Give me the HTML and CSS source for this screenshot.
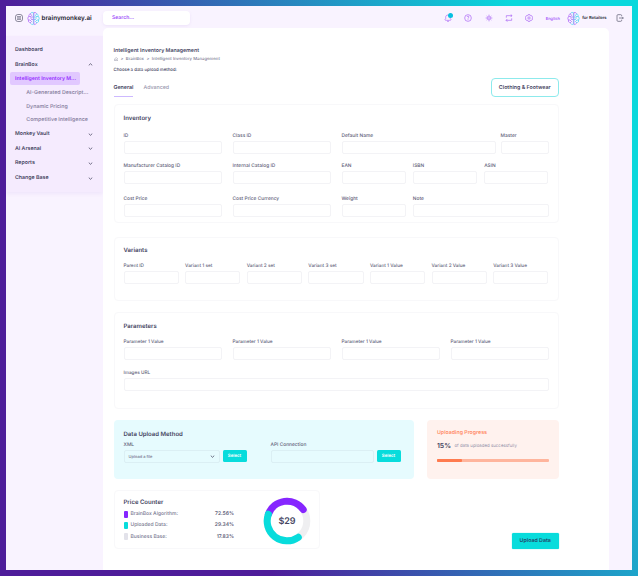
FILE: index.html
```html
<!DOCTYPE html>
<html lang="en">
<head>
  <meta charset="UTF-8" />
  <meta name="viewport" content="width=device-width, initial-scale=1.0"/>
  <title>brainymonkey.ai</title>
  <link rel="stylesheet" href="styles.css">
</head>
<body>
  <svg width="0" height="0" class="defs">
    <linearGradient id="brainFill" x1="0" x2="1" y1="0" y2="0">
      <stop offset="0.4" stop-color="#b06cf8"/>
      <stop offset="0.65" stop-color="#4fd6f0"/>
    </linearGradient>
    <symbol id="brain" viewBox="0 0 26 28">
      <g fill="none" stroke="url(#brainFill)" stroke-width="1.5" stroke-linecap="round" stroke-linejoin="round">
        <path d="M12 2C9 1 7 3 7 5C4 5 3 8 4 10C1 11 1 15 3 17C2 20 4 23 7 22C7 25 10 27 12 26Z"/>
        <path d="M14.500 2C17 1 19 3 19 5C22 5 23 8 22 10C25 11 25 15 23 17C24 20 22 23 19 22C19 25 16 27 14.500 26Z"/>
        <path d="M7 5L9 8M4 10H8V14M3 17H6L8 19M7 22L9 20M12 11H10M12 16H9M19 5L17 8M22 10H18V14M23 17H20L18 19M19 22L17 20M15 11H16M15 16H17"/>
      </g>
    </symbol>
    <symbol id="chevron" viewBox="0 0 10 6"><path d="M1.500 1.200L5 4.600L8.500 1.200" fill="none" stroke="currentColor" stroke-width="1.500"/></symbol>
  </svg>

  <div class="app">
    <header class="topbar">
      <svg class="menu-icon" viewBox="0 0 24 24"><rect x="1.500" y="1.500" width="21" height="21" rx="7"/><path d="M6 8H18M6 12H18M6 16H18"/></svg>
      <svg class="brain"><use href="#brain"/></svg>
      <span class="brand">brainymonkey.ai</span>
      <div class="search">Search...</div>
      <nav class="tools">
        <span class="bell">
          <svg viewBox="0 0 24 24"><path d="M12 3C7 3 5 6 5 10V14L3 17C3 19 5 19 7 19H17C19 19 21 19 21 17L19 14V10M9 21C10 23 14 23 15 21"/></svg>
          <i class="dot"></i>
        </span>
        <svg viewBox="0 0 24 24"><circle cx="12" cy="12" r="10"/><path d="M9 9C9 6 15 6 15 9C15 11 12 11 12 14M12 16V18"/></svg>
        <svg viewBox="0 0 24 24"><circle cx="12" cy="12" r="4"/><path d="M12 2V7M12 17V22M2 12H7M17 12H22M5 6L8.500 9M19 6L15.500 9M5 18L8.500 15M19 18L15.500 15"/></svg>
        <svg viewBox="0 0 24 24"><path d="M4 11V5H21M17 1L21 5L17 9M20 13V19H3M7 15L3 19L7 23"/></svg>
        <svg viewBox="0 0 24 24"><circle cx="12" cy="12" r="3.500"/><path d="M9 2H15L16 5L20 5L23 10L21 12L23 15L20 19H16L15 22H9L8 19H4L1 15L3 12L1 10L4 5L8 5Z"/></svg>
      </nav>
      <span class="lang">English</span>
      <svg class="brain"><use href="#brain"/></svg>
      <span class="account">for Retailers</span>
      <svg class="logout" viewBox="0 0 24 24"><path d="M17 7V5Q17 2 14 2H6Q3 2 3 5V19Q3 22 6 22H14Q17 22 17 19V17M9 12H22M19 9L22 12L19 15"/></svg>
    </header>

    <div class="body">
      <aside class="sidebar">
        <a class="item">Dashboard</a>
        <a class="item">BrainBox <svg class="chev up"><use href="#chevron"/></svg></a>
        <a class="active">Intelligent Inventory M...</a>
        <a class="sub">AI-Generated Descript...</a>
        <a class="sub">Dynamic Pricing</a>
        <a class="sub">Competitive Intelligence</a>
        <a class="item">Monkey Vault <svg class="chev"><use href="#chevron"/></svg></a>
        <a class="item">AI Arsenal <svg class="chev"><use href="#chevron"/></svg></a>
        <a class="item">Reports <svg class="chev"><use href="#chevron"/></svg></a>
        <a class="item">Change Base <svg class="chev"><use href="#chevron"/></svg></a>
      </aside>

      <main class="content">
        <h1>Intelligent Inventory Management</h1>
        <div class="crumbs">
          <svg viewBox="0 0 24 24"><path d="M3 10L12 3L21 10V21H15V14H9V21H3Z"/></svg>
          <span>&gt;</span><span>BrainBox</span><span>&gt;</span><span>Intelligent Inventory Management</span>
        </div>
        <p class="hint">Choose a data upload method:</p>

        <div class="tabs-row">
          <div class="tabs">
            <span class="tab selected">General</span>
            <span class="tab">Advanced</span>
          </div>
          <button class="outline">Clothing &amp; Footwear</button>
        </div>

        <section class="card inventory">
          <h2>Inventory</h2>
          <div class="row">
            <label>ID<input></label>
            <label>Class ID<input></label>
            <div class="group name-master">
              <label>Default Name<input></label>
              <label>Master<input></label>
            </div>
          </div>
          <div class="row">
            <label>Manufacturer Catalog ID<input></label>
            <label>Internal Catalog ID<input></label>
            <div class="group codes">
              <label>EAN<input></label>
              <label>ISBN<input></label>
              <label>ASIN<input></label>
            </div>
          </div>
          <div class="row">
            <label>Cost Price<input></label>
            <label>Cost Price Currency<input></label>
            <div class="group weight-note">
              <label>Weight<input></label>
              <label>Note<input></label>
            </div>
          </div>
        </section>

        <section class="card variants">
          <h2>Variants</h2>
          <div class="row">
            <label>Parent ID<input></label>
            <label>Variant 1 set<input></label>
            <label>Variant 2 set<input></label>
            <label>Variant 3 set<input></label>
            <label>Variant 1 Value<input></label>
            <label>Variant 2 Value<input></label>
            <label>Variant 3 Value<input></label>
          </div>
        </section>

        <section class="card parameters">
          <h2>Parameters</h2>
          <div class="row">
            <label>Parameter 1 Value<input></label>
            <label>Parameter 1 Value<input></label>
            <label>Parameter 1 Value<input></label>
            <label>Parameter 1 Value<input></label>
          </div>
          <label>Images URL<input></label>
        </section>

        <div class="panels">
          <section class="upload">
            <h2>Data Upload Method</h2>
            <div class="sources">
              <label class="xml">XML<span class="picker">Upload a file <svg class="chev"><use href="#chevron"/></svg></span></label>
              <button class="select">Select</button>
              <label class="api">API Connection<input></label>
              <button class="select">Select</button>
            </div>
          </section>
          <section class="progress">
            <h3>Uploading Progress</h3>
            <p><strong>15%</strong> <span>of data uploaded successfully</span></p>
            <div class="bar"><div class="fill"></div></div>
          </section>
        </div>

        <div class="bottom">
          <section class="card price">
            <div class="legend">
              <h2>Price Counter</h2>
              <div class="entry"><i class="violet"></i><span>BrainBox Algorithm:</span><b>72.56%</b></div>
              <div class="entry"><i class="cyan"></i><span>Uploaded Data:</span><b>29.34%</b></div>
              <div class="entry"><i class="grey"></i><span>Business Base:</span><b>17.83%</b></div>
            </div>
            <svg class="donut" viewBox="0 0 48 48">
              <circle cx="24" cy="24" r="19.800" stroke="#efeff1"/>
              <path d="M5.400 17.200A19.800 19.800 0 0 1 40.200 12.600" stroke="#8626ff"/>
              <path d="M5.400 17.200A19.800 19.800 0 0 0 35.300 40.300" stroke="#08dcdc"/>
              <text x="24" y="27.200">$29</text>
            </svg>
          </section>
          <button class="submit">Upload Data</button>
        </div>
      </main>
    </div>
  </div>
</body>
</html>
```
FILE: styles.css
```css
* {
  box-sizing: border-box;
}

body {
  margin: 0;
  padding: 6px;
  width: 638px;
  height: 576px;
  overflow: hidden;
  font-family: Inter, "Liberation Sans", sans-serif;
  font-size: 5.2px;
  text-rendering: geometricPrecision;
  color: #45455f;
  background: linear-gradient(65deg, #4e1d9a 30%, #0ad8dc 86%);
}

.defs {
  position: absolute;
}

h1, h2, h3, p {
  margin: 0;
}

button {
  font-family: inherit;
  text-rendering: inherit;
  padding: 1px 0 0;
  border: none;
}

.app {
  width: 626px;
  height: 564px;
  background: #f9f3ff;
}

/* top bar */
.topbar {
  height: 22px;
  padding: 2px 8px 0 9px;
  display: flex;
  align-items: center;
}

.topbar svg {
  fill: none;
  flex: none;
}

.menu-icon {
  width: 8px;
  height: 8px;
  stroke: #55556a;
  stroke-width: 2;
}

.brain {
  width: 13px;
  height: 15px;
  margin-left: 3.500px;
}

.brand {
  flex: none;
  width: 63.500px;
  padding-left: 2px;
  font-size: 6.300px;
  font-weight: 600;
  color: #22222e;
}

.search {
  flex: none;
  width: 87px;
  height: 14.500px;
  padding-left: 9px;
  border-radius: 4px;
  background: #fff;
  box-shadow: 0 1px 3px rgba(130, 80, 200, 0.1);
  line-height: 15.500px;
  font-size: 5.100px;
  font-weight: 600;
  color: #a04dfa;
}

.tools {
  display: flex;
  gap: 12.300px;
  margin-left: 254px;
}

.tools svg {
  display: block;
  width: 8px;
  height: 8px;
  stroke: #a860f5;
  stroke-width: 2;
}

.bell {
  position: relative;
}

.dot {
  position: absolute;
  top: -1.500px;
  right: -0.500px;
  width: 5px;
  height: 5px;
  border-radius: 50%;
  background: #06bfe0;
}

.lang {
  flex: none;
  width: 18px;
  margin-left: 12.500px;
  font-size: 4.100px;
  font-weight: 500;
  color: #a04dfa;
}

.account {
  flex: none;
  width: 35.500px;
  padding-left: 2px;
  font-size: 4.200px;
  font-weight: 600;
  color: #22222e;
  white-space: nowrap;
}

.logout {
  width: 8px;
  height: 8px;
  stroke: #55556a;
  stroke-width: 2;
}

.body {
  display: flex;
  height: 542px;
}

/* sidebar */
.sidebar {
  width: 97px;
  height: 156px;
  margin-top: 8px;
  padding: 6.300px 4px 0;
  background: #f5ebfe;
  box-shadow: 0 2px 4px rgba(130, 80, 200, 0.08);
  font-weight: 600;
}

.sidebar a {
  display: flex;
  align-items: center;
  white-space: nowrap;
}

.sidebar .item {
  justify-content: space-between;
  height: 14.700px;
  padding: 0.800px 6.500px 0 5px;
  font-size: 5.250px;
}

.sidebar .active {
  width: 70px;
  height: 13px;
  margin: 0.500px 0 1px;
  padding: 1px 0 0 5px;
  border-radius: 2px;
  background: #e1c8ff;
  font-size: 5.200px;
  color: #962eff;
}

.sidebar .sub {
  height: 13.400px;
  padding: 1px 0 0 16.300px;
  font-size: 5.250px;
  color: #8d86a5;
}

.chev {
  width: 5px;
  height: 3px;
  color: #45455f;
}

.chev.up {
  transform: rotate(180deg);
}

/* main area */
.content {
  width: 506px;
  padding: 18px 50.500px 0 10.500px;
  border-radius: 5px 5px 0 0;
  background: #fff;
}

h1 {
  height: 8px;
  line-height: 10px;
  font-size: 5.270px;
  font-weight: 600;
}

.crumbs {
  display: flex;
  align-items: center;
  gap: 2.500px;
  height: 9px;
  padding-top: 1px;
  font-size: 4.250px;
  font-weight: 500;
  color: #77778f;
}

.crumbs svg {
  width: 4.500px;
  height: 4.500px;
  fill: none;
  stroke: #77778f;
  stroke-width: 2;
}

.hint {
  height: 15px;
  line-height: 16.500px;
  font-size: 4.350px;
  font-weight: 500;
}

.tabs-row {
  display: flex;
  justify-content: space-between;
  height: 26px;
}

.tabs {
  display: flex;
  gap: 10px;
  margin-top: 4px;
}

.tab {
  height: 15px;
  line-height: 12px;
  font-size: 5.300px;
  font-weight: 500;
  color: #9795ac;
}

.tab.selected {
  font-weight: 600;
  color: #45455f;
  border-bottom: 1px solid #cdb9ff;
}

.outline {
  width: 67.500px;
  height: 19px;
  border: 1px solid #8deaec;
  border-radius: 4px;
  background: #fff;
  font-size: 5.300px;
  font-weight: 600;
  color: #45455f;
}

.card {
  border: 1px solid #f8f8fa;
  border-radius: 4px;
  background: #fff;
}

h2 {
  height: 10px;
  line-height: 11.500px;
  font-size: 6px;
  font-weight: 600;
}

label {
  display: block;
  flex: 1;
  min-width: 0;
  line-height: 9px;
  font-size: 4.850px;
  font-weight: 500;
  color: #5e5e78;
  white-space: nowrap;
}

label input,
.picker {
  display: block;
  width: 100%;
  height: 13px;
  margin: 0;
  padding: 0;
  border: 1px solid #f3f3f6;
  border-radius: 2px;
  background: transparent;
}

.row,
.group {
  display: flex;
}

.inventory {
  height: 119px;
  padding: 7.500px 9px 0;
}

.inventory .row {
  gap: 11px;
  margin-top: 8px;
}

.inventory h2 + .row {
  margin-top: 9px;
}

.inventory .row:last-child {
  margin-top: 11.500px;
}

.inventory .row > label {
  flex: 0 0 98px;
}

.group {
  flex: 1;
  gap: 7px;
}

.name-master {
  gap: 5px;
}

.name-master label:last-child {
  flex: 0 0 48px;
}

.weight-note label:first-child {
  flex: 0 0 64.300px;
}

.variants {
  height: 64.500px;
  margin-top: 13.500px;
  padding: 7px 9px 0;
}

.variants .row {
  gap: 6.300px;
  margin-top: 7px;
}

.variants label,
.parameters label {
  font-size: 4.700px;
}

.parameters {
  height: 97px;
  margin-top: 11px;
  padding: 7.500px 9px 0;
}

.parameters .row {
  gap: 11px;
  margin: 7px 0 9.500px;
}

.panels {
  display: flex;
  gap: 13px;
  height: 58.500px;
  margin-top: 11px;
}

.upload {
  width: 300.500px;
  padding: 8.500px 10px 0;
  border-radius: 4px;
  background: #e6fbfe;
}

.sources {
  display: flex;
  align-items: flex-end;
  margin-top: 2px;
}

.sources label {
  flex: none;
}

.sources input,
.picker {
  border-color: #dbeff4;
}

.xml {
  width: 96px;
}

.api {
  width: 103px;
  margin-left: 24px;
}

.picker {
  display: flex;
  align-items: center;
  justify-content: space-between;
  padding: 0 4px;
  font-size: 4px;
  color: #77778f;
}

.select {
  width: 24px;
  height: 12.500px;
  margin: 0 0 0.500px 3px;
  border-radius: 1.500px;
  background: #08dcdc;
  font-size: 4.400px;
  font-weight: 600;
  color: #fff;
}

.progress {
  flex: 1;
  padding: 8px 10px 0;
  border-radius: 4px;
  background: #fff2ee;
}

.progress h3 {
  height: 10px;
  line-height: 11.500px;
  font-size: 5.250px;
  font-weight: 600;
  color: #ff8a65;
}

.progress p {
  display: flex;
  align-items: center;
  gap: 3.500px;
  height: 14.500px;
  padding-top: 1px;
  white-space: nowrap;
  font-size: 4.400px;
  color: #9795ac;
}

.progress strong {
  font-size: 6.800px;
  font-weight: 600;
  color: #45455f;
}

.progress span {
  padding-top: 2px;
}

.bar {
  height: 3px;
  margin-top: 6px;
  border-radius: 1px;
  background: #ffb59d;
}

.fill {
  width: 22%;
  height: 3px;
  border-radius: 1px;
  background: #ff7b4f;
}

/* price counter and submit */
.bottom {
  display: flex;
  justify-content: space-between;
  align-items: flex-end;
  height: 59px;
  margin-top: 11px;
}

.price {
  display: flex;
  justify-content: space-between;
  width: 206px;
  height: 59px;
  padding: 6px 8px 0 9px;
}

.legend {
  width: 110.500px;
}

.legend h2 {
  margin-bottom: 2px;
}

.entry {
  display: flex;
  align-items: center;
  height: 11.300px;
  font-size: 5px;
  font-weight: 500;
  line-height: 7px;
  color: #77778f;
}

.entry span,
.entry b {
  padding-top: 1px;
}

.entry i {
  width: 4px;
  height: 7px;
  margin-right: 3px;
  border-radius: 1px;
}

.entry b {
  margin-left: auto;
  font-weight: 600;
  color: #5e5e78;
}

.violet {
  background: #8626ff;
}

.cyan {
  background: #08dcdc;
}

.grey {
  background: #e2e2ea;
}

.donut {
  width: 48px;
  height: 48px;
  fill: none;
  stroke-width: 7;
  stroke-linecap: round;
}

.donut text {
  fill: #45455f;
  text-anchor: middle;
  font-size: 9px;
  font-weight: 600;
}

.submit {
  width: 46.500px;
  height: 15.500px;
  border-radius: 1.500px;
  background: #08dcdc;
  box-shadow: 0 0 1px #08dcdc;
  font-size: 5.300px;
  font-weight: 600;
  color: #24476a;
}
```
